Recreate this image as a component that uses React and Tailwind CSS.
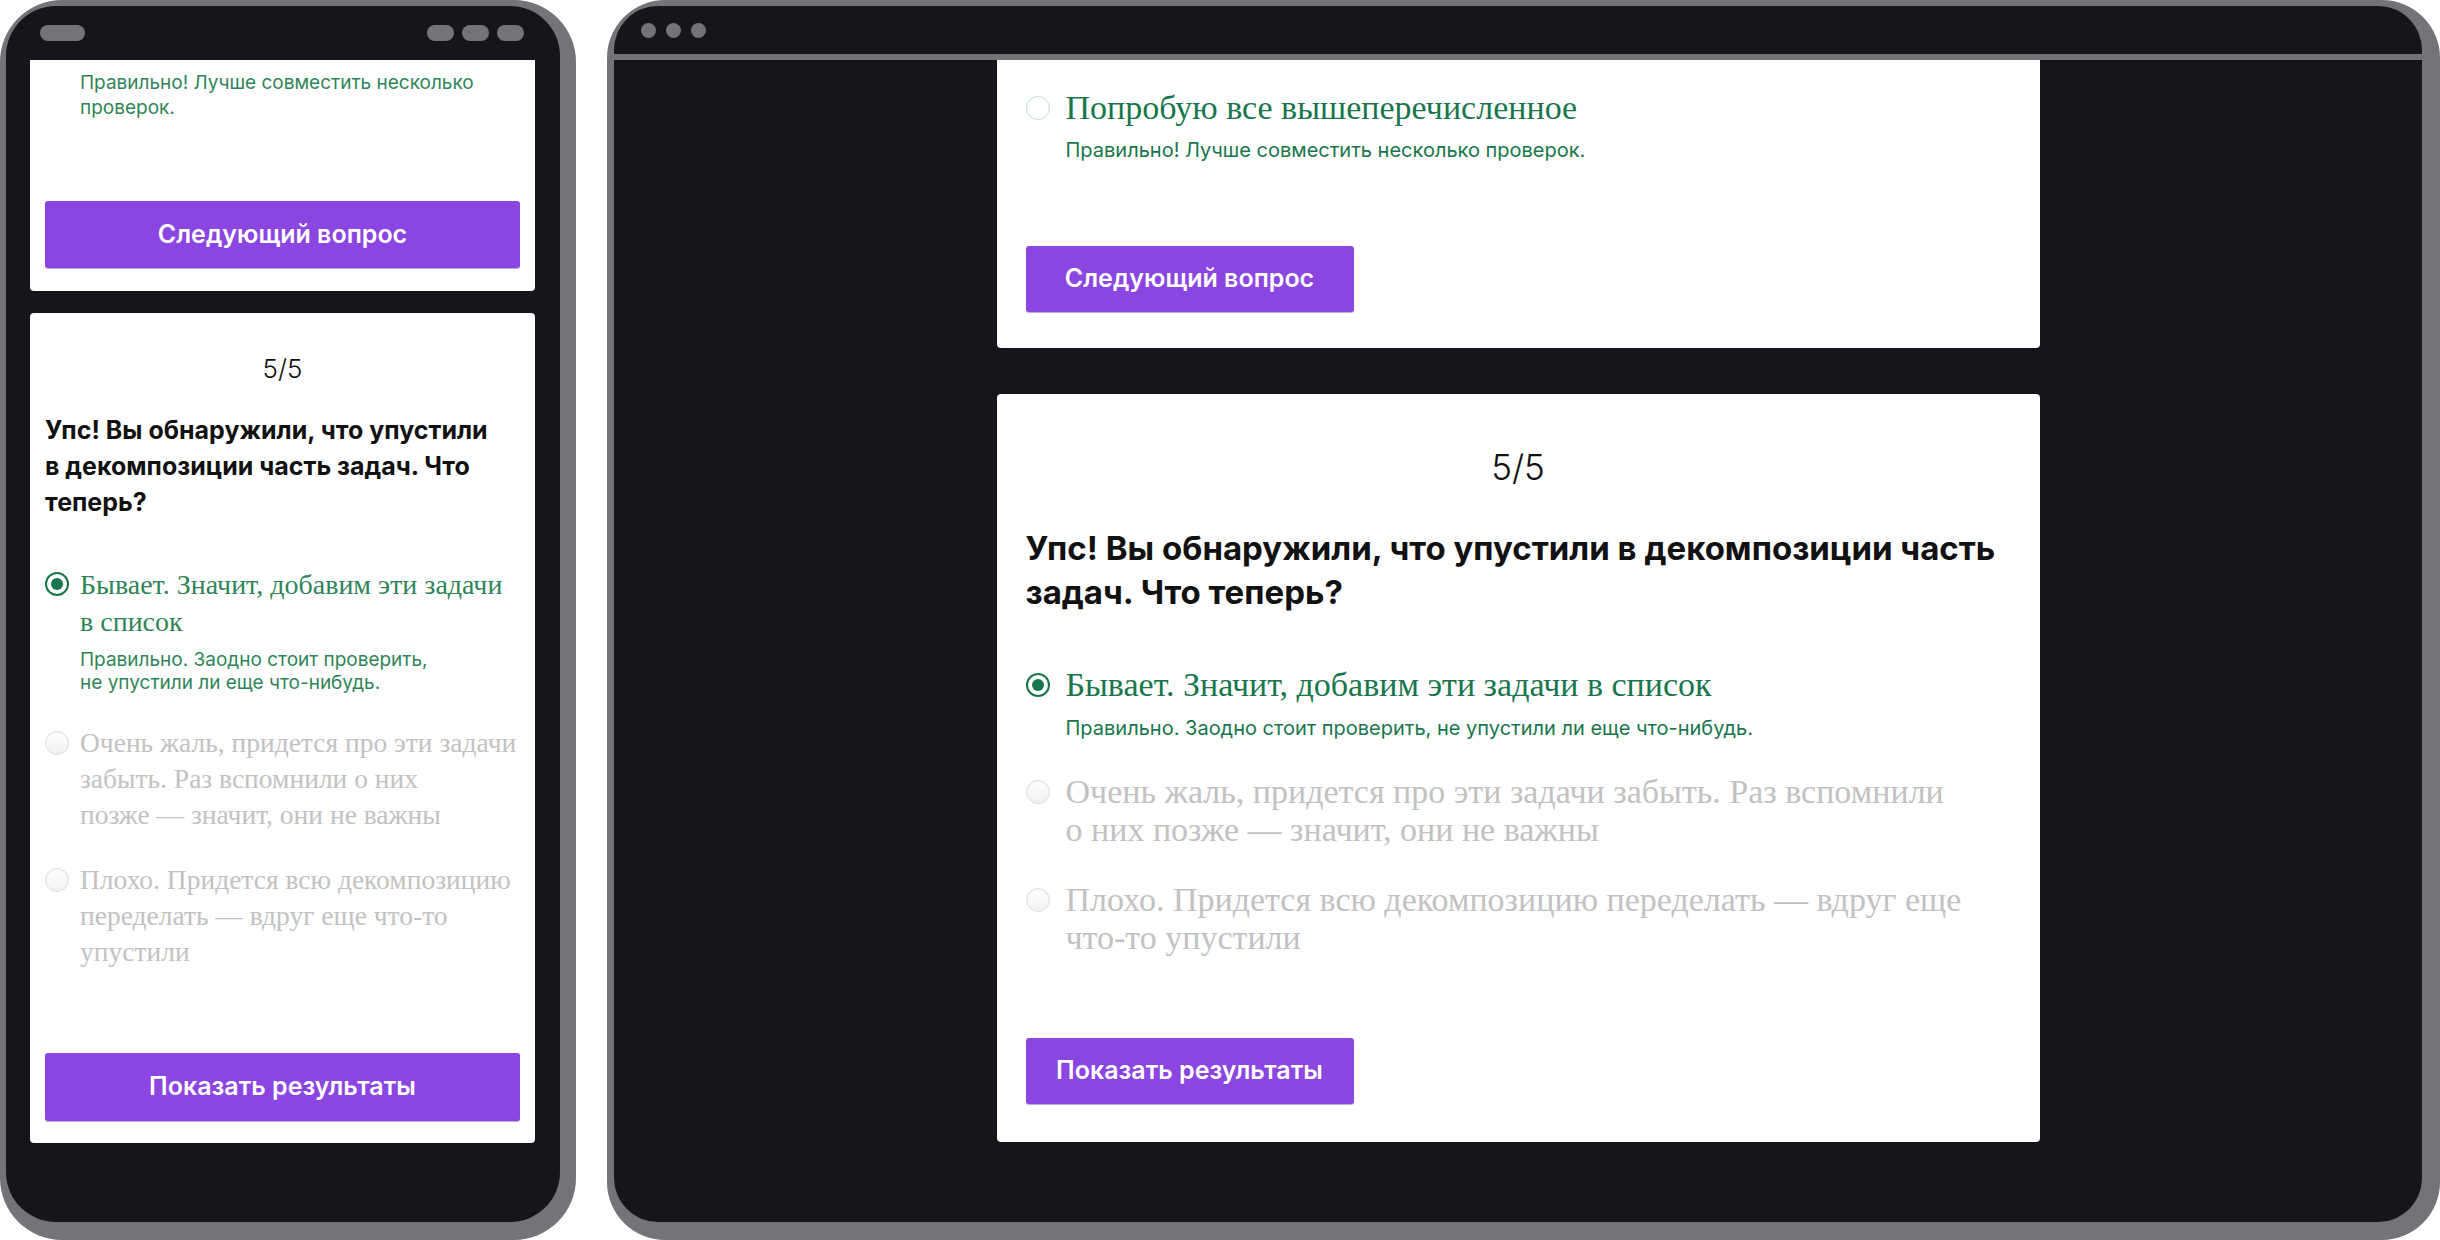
import React from "react";

const SANS = "font-['Inter',sans-serif]";
const SERIF = "font-['Liberation_Serif',serif]";

function Radio({ state, className }) {
  if (state === "selected") {
    return (
      <span className={"flex h-[24px] w-[24px] shrink-0 items-center justify-center rounded-full border-2 border-[#18764d] bg-white " + className}>
        <span className="h-[12px] w-[12px] rounded-full bg-[#18764d]" />
      </span>
    );
  }
  if (state === "correct") {
    return <span className={"h-[24px] w-[24px] shrink-0 rounded-full border-[1.5px] border-[#c4ddd1] bg-white " + className} />;
  }
  return (
    <span className={"h-[24px] w-[24px] shrink-0 rounded-full border border-[#dedede] bg-linear-to-b from-white to-[#f1f1f1] shadow-[inset_0_1px_1px_rgba(0,0,0,0.06)] " + className} />
  );
}

function Button({ children, className }) {
  return (
    <button className={"flex items-center justify-center rounded-[3px] bg-[#8b45e0] font-semibold text-white shadow-[0_1px_0_rgba(60,20,120,0.35)] " + SANS + " " + className}>
      {children}
    </button>
  );
}

function Phone() {
  return (
    <div className="flex h-[1240px] w-[576px] shrink-0 rounded-[62px] bg-[#737478] pt-[6px] pr-[16px] pb-[18px] pl-[6px]">
      <div className="flex flex-1 flex-col overflow-hidden rounded-[50px] bg-[#14161c]">
        <div className="flex h-[54px] shrink-0 items-center justify-between pr-[36px] pl-[34px]">
          <span className="h-[16px] w-[45px] rounded-full bg-[#737478]" />
          <div className="flex gap-[8px]">
            <span className="h-[16px] w-[27px] rounded-full bg-[#737478]" />
            <span className="h-[16px] w-[27px] rounded-full bg-[#737478]" />
            <span className="h-[16px] w-[27px] rounded-full bg-[#737478]" />
          </div>
        </div>
        <div className="flex flex-col gap-[22px] pr-[25px] pl-[24px]">
          {/* card 1 (scrolled) */}
          <div className="flex flex-col rounded-b-[4px] bg-white px-[15px] pt-[10px] pb-[23px] shadow-[0_1px_1px_rgba(0,0,0,0.2)]">
            <p className={"pl-[35px] text-[19px] leading-[25px] text-[#2f8559] " + SANS}>
              Правильно! Лучше совместить несколько
              <br />
              проверок.
            </p>
            <Button className="mt-[81px] h-[67px] w-full text-[25px]">Следующий вопрос</Button>
          </div>
          {/* card 2 */}
          <div className="flex flex-col rounded-[4px] bg-white px-[15px] pt-[38px] pb-[22px] shadow-[0_1px_1px_rgba(0,0,0,0.2)]">
            <div className={"text-center text-[26px] leading-[36px] font-light text-[#111] " + SANS}>5/5</div>
            <h2 className={"mt-[25px] whitespace-nowrap text-[25px] leading-[36px] font-bold text-[#111] " + SANS}>
              Упс! Вы обнаружили, что упустили
              <br />в декомпозиции часть задач. Что
              <br />
              теперь?
            </h2>
            <div className="mt-[46px] flex items-start gap-[11px]">
              <Radio state="selected" className="mt-[6px]" />
              <div className="flex flex-col">
                <p className={"whitespace-nowrap text-[28px] leading-[37px] text-[#2f8559] " + SERIF}>
                  Бывает. Значит, добавим эти задачи
                  <br />в список
                </p>
                <p className={"mt-[8px] whitespace-nowrap text-[19px] leading-[23px] text-[#2f8559] " + SANS}>
                  Правильно. Заодно стоит проверить,
                  <br />
                  не упустили ли еще что-нибудь.
                </p>
              </div>
            </div>
            <div className="mt-[31px] flex items-start gap-[11px]">
              <Radio className="mt-[6px]" />
              <p className={"whitespace-nowrap text-[27.5px] leading-[36px] text-[#c2c2c2] " + SERIF}>
                Очень жаль, придется про эти задачи
                <br />
                забыть. Раз вспомнили о них
                <br />
                позже — значит, они не важны
              </p>
            </div>
            <div className="mt-[29px] flex items-start gap-[11px]">
              <Radio className="mt-[6px]" />
              <p className={"whitespace-nowrap text-[27.5px] leading-[36px] text-[#c2c2c2] " + SERIF}>
                Плохо. Придется всю декомпозицию
                <br />
                переделать — вдруг еще что-то
                <br />
                упустили
              </p>
            </div>
            <Button className="mt-[83px] h-[68px] w-full text-[25px]">Показать результаты</Button>
          </div>
        </div>
      </div>
    </div>
  );
}

function Desktop() {
  return (
    <div className="flex h-[1240px] flex-1 rounded-[58px] bg-[#737478] pt-[6px] pr-[18px] pb-[18px] pl-[7px]">
      <div className="flex flex-1 flex-col overflow-hidden rounded-[44px] bg-[#14161c]">
        <div className="flex h-[54px] shrink-0 items-center gap-[10px] border-b-[6px] border-[#737478] pl-[27px]">
          <span className="h-[15px] w-[15px] rounded-full bg-[#737478]" />
          <span className="h-[15px] w-[15px] rounded-full bg-[#737478]" />
          <span className="h-[15px] w-[15px] rounded-full bg-[#737478]" />
        </div>
        <div className="flex flex-col items-center gap-[46px]">
          {/* card 1 (scrolled) */}
          <div className="flex w-[1043px] flex-col rounded-b-[4px] bg-white px-[29px] pt-[29px] pb-[36px] shadow-[0_1px_1px_rgba(0,0,0,0.2)]">
            <div className="flex items-start gap-[16px]">
              <Radio state="correct" className="mt-[7px]" />
              <p className={"text-[34px] leading-[38px] text-[#18764d] " + SERIF}>Попробую все вышеперечисленное</p>
            </div>
            <p className={"mt-[10px] pl-[40px] text-[20px] leading-[26px] text-[#18764d] " + SANS}>
              Правильно! Лучше совместить несколько проверок.
            </p>
            <Button className="mt-[83px] h-[66px] w-[328px] text-[25px]">Следующий вопрос</Button>
          </div>
          {/* card 2 */}
          <div className="flex w-[1043px] flex-col rounded-[4px] bg-white px-[29px] pt-[53px] pb-[38px] shadow-[0_1px_1px_rgba(0,0,0,0.2)]">
            <div className={"text-center text-[35px] leading-[40px] font-light text-[#111] " + SANS}>5/5</div>
            <h2 className={"mt-[39px] whitespace-nowrap text-[33px] leading-[44px] font-bold text-[#111] " + SANS}>
              Упс! Вы обнаружили, что упустили в декомпозиции часть
              <br />
              задач. Что теперь?
            </h2>
            <div className="mt-[52px] flex items-start gap-[16px]">
              <Radio state="selected" className="mt-[7px]" />
              <div className="flex flex-col">
                <p className={"text-[34px] leading-[38px] text-[#18764d] " + SERIF}>Бывает. Значит, добавим эти задачи в список</p>
                <p className={"mt-[11px] text-[20px] leading-[26px] text-[#18764d] " + SANS}>
                  Правильно. Заодно стоит проверить, не упустили ли еще что-нибудь.
                </p>
              </div>
            </div>
            <div className="mt-[32px] flex items-start gap-[16px]">
              <Radio className="mt-[7px]" />
              <p className={"whitespace-nowrap text-[34px] leading-[38px] text-[#c2c2c2] " + SERIF}>
                Очень жаль, придется про эти задачи забыть. Раз вспомнили
                <br />о них позже — значит, они не важны
              </p>
            </div>
            <div className="mt-[32px] flex items-start gap-[16px]">
              <Radio className="mt-[7px]" />
              <p className={"whitespace-nowrap text-[34px] leading-[38px] text-[#c2c2c2] " + SERIF}>
                Плохо. Придется всю декомпозицию переделать — вдруг еще
                <br />
                что-то упустили
              </p>
            </div>
            <Button className="mt-[81px] h-[66px] w-[328px] text-[25px]">Показать результаты</Button>
          </div>
        </div>
      </div>
    </div>
  );
}

export default function App() {
  return (
    <div className="flex h-[1240px] w-[2440px] gap-[31px] overflow-hidden bg-white">
      <Phone />
      <Desktop />
    </div>
  );
}
